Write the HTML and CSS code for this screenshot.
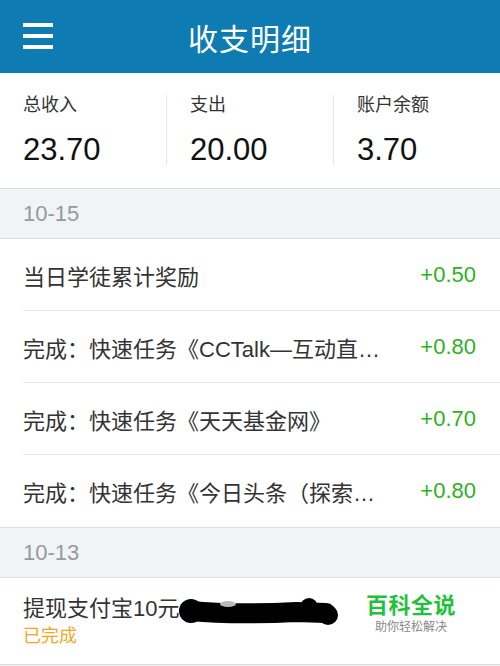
FILE: index.html
```html
<!DOCTYPE html>
<html lang="zh-CN">
<head>
    <meta charset="UTF-8">
    <meta name="viewport" content="width=device-width, initial-scale=1.0">
    <title>收支明细</title>
    <link rel="stylesheet" href="styles.css">
</head>
<body>
    <header class="topbar">
        <div class="menu-btn">
            <span></span>
            <span></span>
            <span></span>
        </div>
        <h1>收支明细</h1>
    </header>

    <section class="summary">
        <div class="stat">
            <div class="stat-label">总收入</div>
            <div class="stat-value">23.70</div>
        </div>
        <div class="stat">
            <div class="stat-label">支出</div>
            <div class="stat-value">20.00</div>
        </div>
        <div class="stat">
            <div class="stat-label">账户余额</div>
            <div class="stat-value">3.70</div>
        </div>
    </section>

    <div class="day">10-15</div>
    <ul class="records">
        <li class="record">
            <span class="record-title">当日学徒累计奖励</span>
            <span class="amount">+0.50</span>
        </li>
        <li class="record">
            <span class="record-title">完成：快速任务《CCTalk—互动直播课堂》</span>
            <span class="amount">+0.80</span>
        </li>
        <li class="record">
            <span class="record-title">完成：快速任务《天天基金网》</span>
            <span class="amount">+0.70</span>
        </li>
        <li class="record">
            <span class="record-title">完成：快速任务《今日头条（探索版）》</span>
            <span class="amount">+0.80</span>
        </li>
    </ul>

    <div class="day">10-13</div>
    <ul class="records">
        <li class="record withdraw">
            <div class="record-title">提现支付宝10元</div>
            <div class="status">已完成</div>
            <!-- redacted account name -->
            <svg class="redact" width="170" height="40" viewBox="0 0 170 40">
                <path d="M15 17 C45 20 80 20 120 18 L150 19" fill="none" stroke="#000" stroke-width="20" stroke-linecap="round"/>
                <circle cx="15" cy="17" r="12" fill="#000"/>
                <circle cx="133" cy="13" r="9" fill="#000"/>
                <circle cx="152" cy="21" r="10" fill="#000"/>
                <ellipse cx="52" cy="10" rx="8" ry="3" fill="#bbb"/>
            </svg>
        </li>
    </ul>

    <div class="watermark">
        <div class="wm-name">百科全说</div>
        <div class="wm-tag">助你轻松解决</div>
    </div>
</body>
</html>
```

FILE: styles.css
```css
body {
    margin: 0;
    width: 500px;
    height: 666px;
    overflow: hidden;
    position: relative;
    background-color: #f0f4f7;
    font-family: "Liberation Sans", "Noto Sans CJK SC", sans-serif;
    color: #333;
}
.topbar {
    height: 73px;
    background-color: #0e7cb3;
    display: flex;
    align-items: center;
    justify-content: center;
    position: relative;
}
.topbar h1 {
    margin: 0;
    color: white;
    font-size: 30px;
    font-weight: normal;
    letter-spacing: 1px;
}
.menu-btn {
    position: absolute;
    left: 23px;
    top: 23px;
    width: 30px;
    display: flex;
    flex-direction: column;
    gap: 7px;
}
.menu-btn span {
    display: block;
    height: 4px;
    background: white;
}
.summary {
    display: flex;
    background: white;
    padding: 22px 0 23px;
    border-bottom: 1px solid #dcdfe2;
}
.stat {
    flex: 1;
    padding-left: 23px;
}
.stat + .stat {
    border-left: 1px solid #e6e6e6;
}
.stat-label {
    font-size: 18px;
    line-height: 20px;
    color: #333;
}
.stat-value {
    margin-top: 20px;
    font-size: 31px;
    line-height: 30px;
    color: #111;
}
.day {
    height: 49px;
    line-height: 50px;
    padding-left: 23px;
    font-size: 22px;
    color: #999;
    border-bottom: 1px solid #dcdfe2;
}
.records {
    list-style: none;
    margin: 0;
    padding: 0 0 0 23px;
    background: white;
    border-bottom: 1px solid #dcdfe2;
}
.record {
    height: 71px;
    display: flex;
    align-items: center;
    gap: 36px;
    padding-right: 24px;
    font-size: 22px;
    border-bottom: 1px solid #e6e6e6;
}
.record:last-child {
    border-bottom: none;
    height: 72px;
}
.record-title {
    flex: 1;
    min-width: 0;
    white-space: nowrap;
    overflow: hidden;
    text-overflow: ellipsis;
}
.amount {
    color: #2cb31c;
}
.record.withdraw {
    display: block;
    position: relative;
    height: auto;
    padding: 18px 0 16px;
}
.withdraw .record-title {
    line-height: 26px;
}
.status {
    margin-top: 2px;
    font-size: 18px;
    line-height: 24px;
    color: #f5a623;
}
.redact {
    position: absolute;
    left: 153px;
    top: 16px;
}
.watermark {
    position: absolute;
    left: 366px;
    top: 593px;
    text-align: center;
}
.wm-name {
    font-size: 22px;
    line-height: 26px;
    font-weight: bold;
    color: #1fc23a;
    letter-spacing: 0.5px;
}
.wm-tag {
    font-size: 12px;
    line-height: 16px;
    color: #888;
}
```
